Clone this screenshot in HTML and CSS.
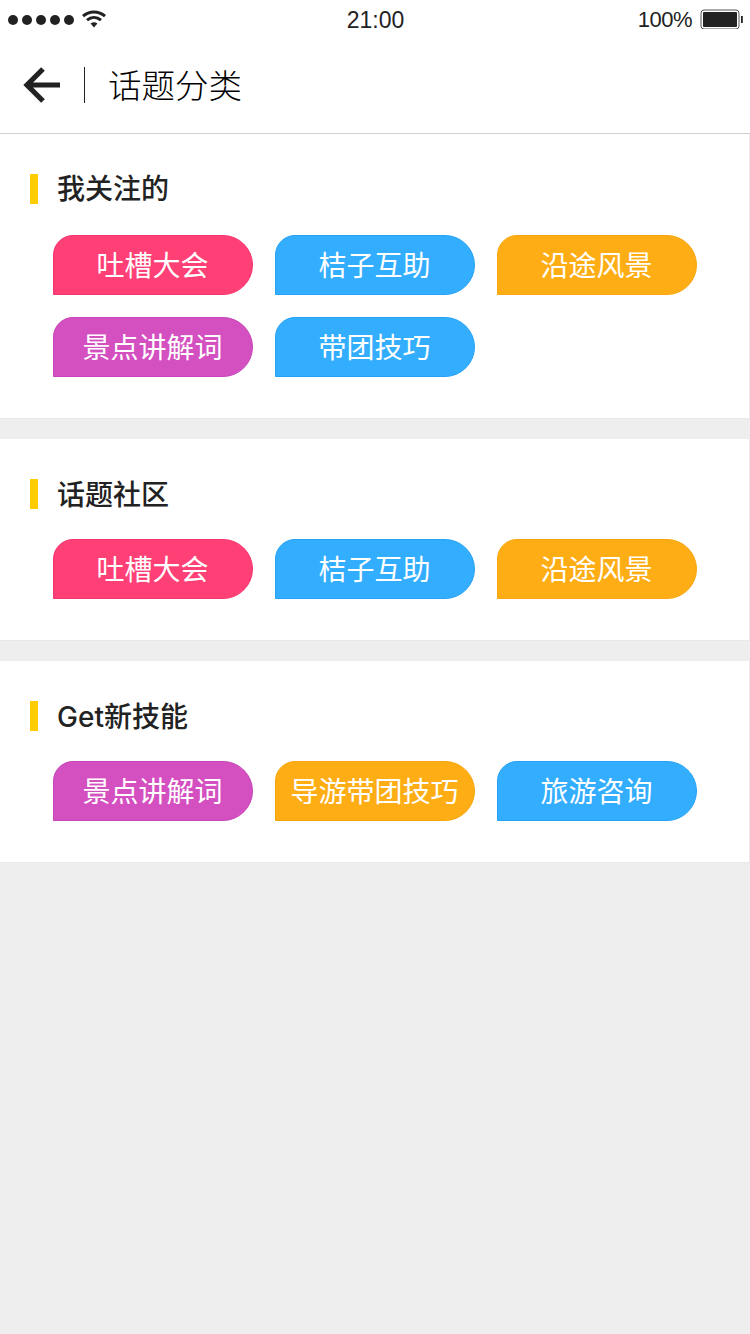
FILE: index.html
```html
<!DOCTYPE html>
<html lang="zh">
<head>
<meta charset="utf-8">
<title>话题分类</title>
<link rel="stylesheet" href="styles.css">
</head>
<body>
<div class="status">
  <div class="status-left">
    <span class="dots"><i></i><i></i><i></i><i></i><i></i></span>
    <svg class="wifi" width="24" height="18" viewBox="0 0 24 18"><path d="M1 6.200C7.200 .6 16.800 .6 23 6.200" fill="none" stroke="#222" stroke-width="3"/><path d="M5 10.200C9.200 6.600 14.800 6.600 19 10.200" fill="none" stroke="#222" stroke-width="3"/><path d="M8.600 13.400C10.800 11.800 13.200 11.800 15.400 13.400L12 17.500Z" fill="#222"/></svg>
  </div>
  <div class="time">21:00</div>
  <div class="status-right">
    <span class="pct">100%</span>
    <svg class="battery" width="43" height="20" viewBox="0 0 43 20"><rect x="1" y="1" width="38" height="19" rx="3" fill="#fff" stroke="#555" stroke-width="1"/><rect x="3" y="3" width="34" height="15" rx="1" fill="#222"/><rect x="41" y="7" width="1.800" height="7" fill="#222"/></svg>
  </div>
</div>
<header class="nav">
  <svg class="back" width="38" height="38" viewBox="0 0 38 38"><path d="M37 19H4M20 3L4 19L20 35" fill="none" stroke="#222" stroke-width="5.200"/></svg>
  <span class="divider"></span>
  <h1>话题分类</h1>
</header>
<main>
  <section class="card first">
    <h2>我关注的</h2>
    <div class="tags">
      <a class="tag pink">吐槽大会</a>
      <a class="tag blue">桔子互助</a>
      <a class="tag orange">沿途风景</a>
      <a class="tag purple">景点讲解词</a>
      <a class="tag blue">带团技巧</a>
    </div>
  </section>
  <section class="card">
    <h2>话题社区</h2>
    <div class="tags">
      <a class="tag pink">吐槽大会</a>
      <a class="tag blue">桔子互助</a>
      <a class="tag orange">沿途风景</a>
    </div>
  </section>
  <section class="card">
    <h2>Get新技能</h2>
    <div class="tags">
      <a class="tag purple">景点讲解词</a>
      <a class="tag orange">导游带团技巧</a>
      <a class="tag blue">旅游咨询</a>
    </div>
  </section>
</main>
</body>
</html>
```
FILE: styles.css
```css
* { box-sizing: border-box; }
html, body { margin: 0; padding: 0; }
body {
  width: 750px;
  height: 1334px;
  overflow: hidden;
  background: #eeeeee;
  color: #222;
  font-family: "Liberation Sans", "Noto Sans CJK SC", sans-serif;
}
.status {
  height: 40px;
  background: #fff;
  display: grid;
  grid-template-columns: 1fr auto 1fr;
  align-items: center;
  font-size: 23px;
}
.status-left { display: flex; align-items: center; padding-left: 8px; gap: 8px; }
.dots { display: flex; gap: 4px; }
.dots i { display: block; width: 10px; height: 10px; border-radius: 50%; background: #222; }
.wifi { display: block; margin-top: -2px; }
.time { color: #222; padding-left: 1px; }
.status-right { display: flex; justify-content: flex-end; align-items: center; gap: 8px; padding-right: 7px; }
.pct { font-size: 22px; letter-spacing: -0.5px; }
.battery { display: block; margin-top: -2px; }
.nav {
  height: 94px;
  background: #fff;
  border-bottom: 1px solid #cfcfcf;
  display: flex;
  align-items: center;
  padding: 0 0 3px 23px;
}
.back { display: block; }
.divider { width: 1px; height: 36px; background: #222; margin: 0 23px 0 23px; }
h1 { margin: 4px 0 0; font-size: 33.500px; font-weight: 300; color: #000; line-height: 40px; }
.card {
  background: #fff;
  margin-bottom: 20px;
  padding: 40px 0 41px 30px;
  border-bottom: 1px solid #e9e9e9;
  border-right: 1px solid #e9e9e9;
}
h2 {
  margin: 0;
  height: 30px;
  padding-left: 19px;
  border-left: 8px solid #ffcc00;
  font-family: Inter, "Noto Sans CJK SC", sans-serif;
  font-size: 28px;
  line-height: 32px;
  font-weight: 500;
  color: #222;
}
.first h2 { line-height: 30px; }
.tags {
  display: flex;
  flex-wrap: wrap;
  gap: 22px;
  margin: 30px 0 0 23px;
}
.first .tags { margin-top: 31px; }
.tag {
  width: 200px;
  height: 60px;
  border-radius: 20px 30px 30px 0;
  display: flex;
  align-items: center;
  justify-content: center;
  color: #fff;
  font-size: 28px;
  font-weight: 400;
  padding: 0 1px 2px 0;
}
.pink { background: #ff4077; border: 1px solid #f5366e; }
.blue { background: #33aeff; border: 1px solid #26a2f5; }
.orange { background: #ffad14; border: 1px solid #f7a50c; }
.purple { background: #d44fc0; border: 1px solid #c645b8; }
```
